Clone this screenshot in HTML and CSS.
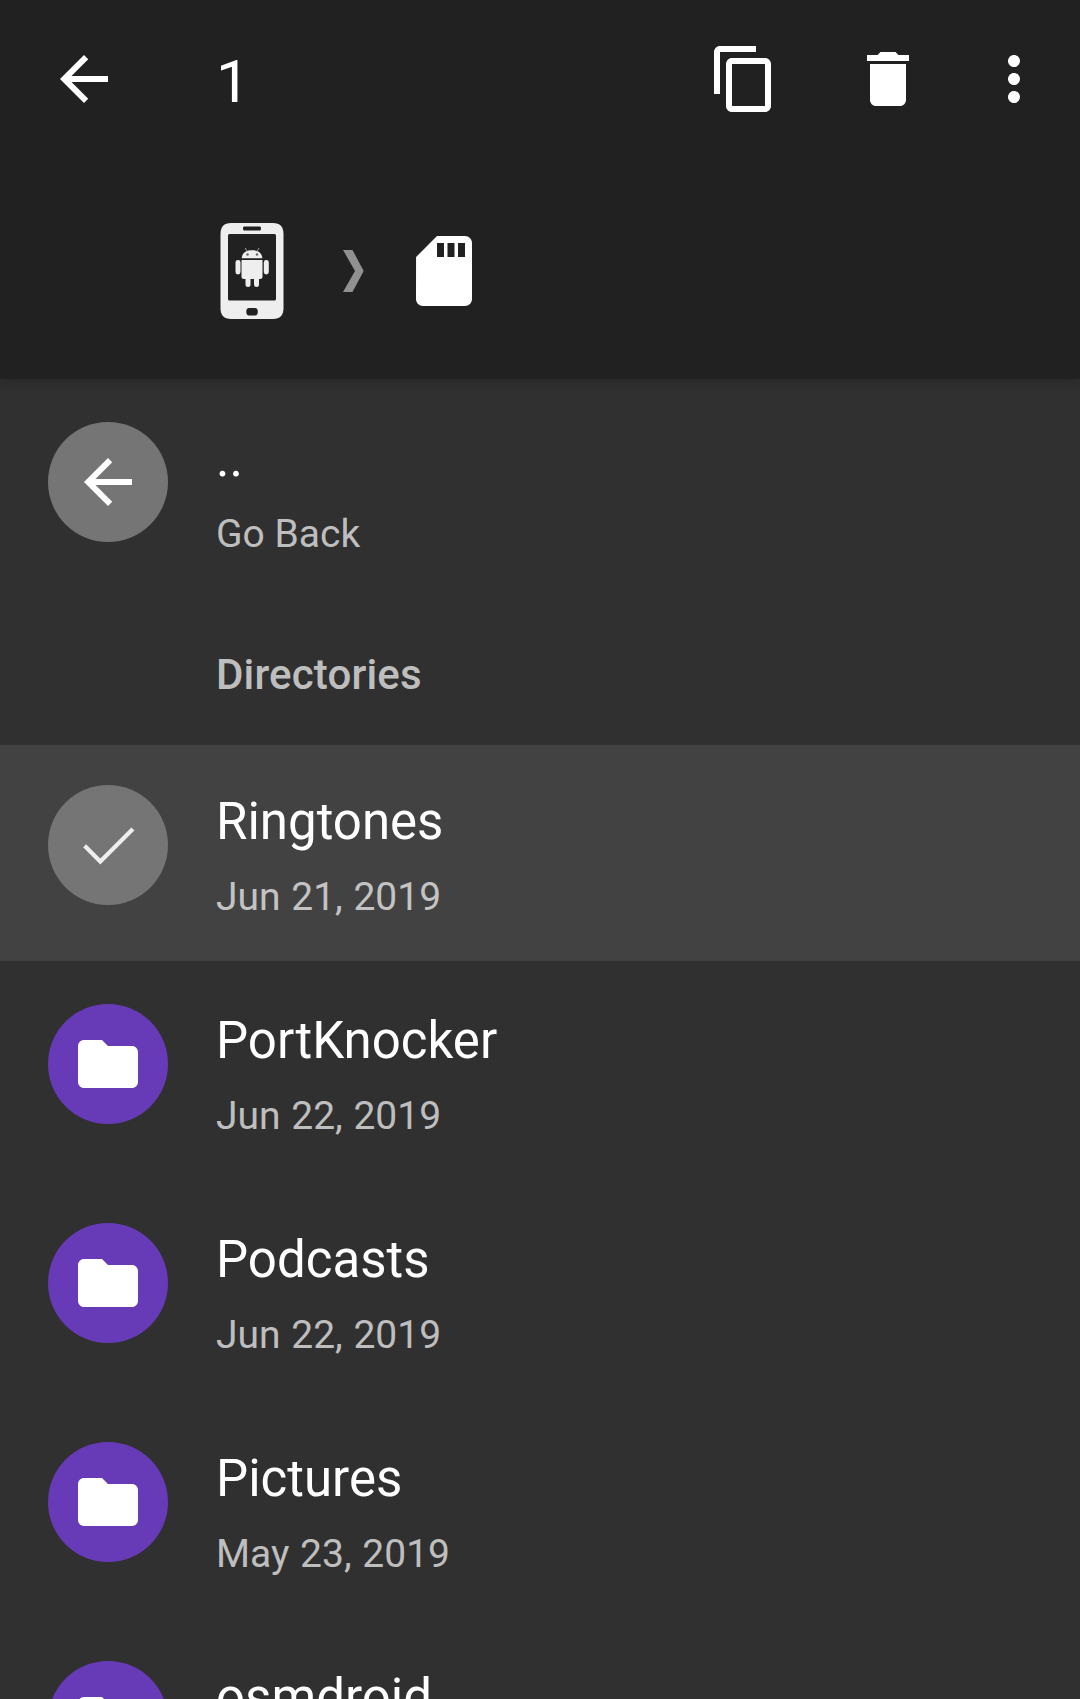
FILE: index.html
```html
<!DOCTYPE html>
<html lang="en">
<head>
<meta charset="utf-8">
<title>Files</title>
<link rel="stylesheet" href="styles.css">
</head>
<body>
<svg class="defs" width="0" height="0" aria-hidden="true">
  <symbol id="arrow" viewBox="0 0 24 24"><path d="M20 11H7.830l5.590-5.590L12 4l-8 8 8 8 1.410-1.410L7.830 13H20v-2z"/></symbol>
  <symbol id="folder" viewBox="0 0 24 24"><path d="M10 4H4c-1.100 0-1.990.9-1.990 2L2 18c0 1.100.9 2 2 2h16c1.100 0 2-.9 2-2V8c0-1.100-.9-2-2-2h-8l-2-2z"/></symbol>
</svg>
<header class="appbar">
  <div class="toolbar">
    <svg class="icon"><use href="#arrow"/></svg>
    <span class="count">1</span>
    <div class="actions">
      <svg class="icon" viewBox="0 0 24 24"><path d="M16 1H4c-1.100 0-2 .9-2 2v14h2V3h12V1zm3 4H8c-1.100 0-2 .9-2 2v14c0 1.100.9 2 2 2h11c1.100 0 2-.9 2-2V7c0-1.100-.9-2-2-2zm0 16H8V7h11v14z"/></svg>
      <svg class="icon" viewBox="0 0 24 24"><path d="M6 19c0 1.100.9 2 2 2h8c1.100 0 2-.9 2-2V7H6v12zM19 4h-3.500l-1-1h-5l-1 1H5v2h14V4z"/></svg>
      <svg class="icon more" viewBox="0 0 24 24"><path d="M12 8c1.100 0 2-.9 2-2s-.9-2-2-2-2 .9-2 2 .9 2 2 2zm0 2c-1.100 0-2 .9-2 2s.9 2 2 2 2-.9 2-2-.9-2-2-2zm0 6c-1.100 0-2 .9-2 2s.9 2 2 2 2-.9 2-2-.9-2-2-2z"/></svg>
    </div>
  </div>
  <nav class="breadcrumb">
    <svg class="phone" viewBox="0 0 64 96">
      <path fill-rule="evenodd" d="M11 0H53Q63.500 0 63.500 11V85Q63.500 96 53 96H11Q.5 96 .5 85V11Q.5 0 11 0ZM9.500 11Q8 11 8 12.500V76Q8 77.500 9.500 77.500H54.500Q56 77.500 56 76V12.500Q56 11 54.500 11ZM24 3.500Q23 3.500 23 5.500T24 7.500H40Q41 7.500 41 5.500T40 3.500ZM29 85Q26.300 85 26.300 88.700T29 92.500H35Q37.800 92.500 37.800 88.700T35 85Z"/>
      <path d="M21.700 35.200C22 30 26 27.200 32 27.200S42 30 42.400 35.200ZM21.500 37H42.500V53.500Q42.500 56 40 56H39V61.500A2.500 2.500 0 0 1 34 61.500V56H30.500V61.500A2.500 2.500 0 0 1 25.500 61.500V56H24Q21.500 56 21.500 53.500Z"/>
      <rect x="15.500" y="37" width="5" height="14.500" rx="2.400"/><rect x="43.800" y="37" width="5" height="14.500" rx="2.400"/>
      <path class="antenna" d="M25.200 25l2 3.500M39 25l-2 3.500"/>
      <circle class="eye" cx="27.500" cy="31.500" r="1.200"/><circle class="eye" cx="37" cy="31.500" r="1.200"/>
    </svg>
    <svg class="chevron" viewBox="0 0 21 42"><path d="M0 0H9.500L20.700 21 9.500 42H0L12 21z"/></svg>
    <svg class="card" viewBox="0 0 24 24"><path d="M18 2h-8L4.020 8 4 20c0 1.100.9 2 2 2h12c1.100 0 2-.9 2-2V4c0-1.100-.9-2-2-2zm-6 6h-2V4h2v4zm3 0h-2V4h2v4zm3 0h-2V4h2v4z"/></svg>
  </nav>
</header>
<main class="list">
  <div class="row">
    <div class="avatar gray"><svg class="icon"><use href="#arrow"/></svg></div>
    <div class="text"><div class="title">..</div><div class="sub">Go Back</div></div>
  </div>
  <h2 class="section">Directories</h2>
  <div class="row selected">
    <div class="avatar gray"><svg class="icon check" viewBox="0 0 72 72"><path d="M12.600 36.800 28.300 52.500 60.900 19.900"/></svg></div>
    <div class="text"><div class="title">Ringtones</div><div class="sub date">Jun 21, 2019</div></div>
  </div>
  <div class="row">
    <div class="avatar"><svg class="icon"><use href="#folder"/></svg></div>
    <div class="text"><div class="title">PortKnocker</div><div class="sub date">Jun 22, 2019</div></div>
  </div>
  <div class="row">
    <div class="avatar"><svg class="icon"><use href="#folder"/></svg></div>
    <div class="text"><div class="title">Podcasts</div><div class="sub date">Jun 22, 2019</div></div>
  </div>
  <div class="row">
    <div class="avatar"><svg class="icon"><use href="#folder"/></svg></div>
    <div class="text"><div class="title">Pictures</div><div class="sub date">May 23, 2019</div></div>
  </div>
  <div class="row">
    <div class="avatar"><svg class="icon"><use href="#folder"/></svg></div>
    <div class="text"><div class="title">osmdroid</div></div>
  </div>
</main>
</body>
</html>
```
FILE: styles.css
```css
* { box-sizing: border-box; }
body {
  margin: 0;
  height: 1699px;
  display: flex;
  flex-direction: column;
  overflow: hidden;
  background: #303030;
  color: #fff;
  font-family: Roboto, sans-serif;
}
svg { display: block; flex: none; fill: currentColor; }
.defs { display: none; }
.icon { width: 72px; height: 72px; }

.appbar {
  flex: none;
  height: 379px;
  background: #212121;
  box-shadow: 0 3px 10px rgba(0, 0, 0, .2);
}
.toolbar {
  height: 158px;
  padding: 0 30px 0 48px;
  display: flex;
  align-items: center;
}
.count {
  margin-left: 96px;
  padding-top: 5px;
  font-size: 60px;
  line-height: 70px;
}
.actions { margin-left: auto; display: flex; gap: 72px; }
.more { margin-left: -18px; }

.breadcrumb {
  padding: 65px 0 0 220px;
  display: flex;
  align-items: center;
}
.phone { width: 64px; height: 96px; color: #eee; }
.antenna { fill: none; stroke: #aaa; stroke-width: .9; }
.eye { fill: #666; }
.chevron { width: 21px; height: 42px; margin: 0 38px 0 59px; color: #909090; }
.card { width: 84px; height: 84px; }

.list { flex: 1; min-height: 0; overflow: hidden; padding-top: 3px; }
.row {
  height: 216px;
  margin-bottom: 3px;
  padding: 40px 48px 0;
  display: flex;
  gap: 48px;
}
.row:last-child { margin-bottom: 0; }
.selected { background: #424242; }
.avatar {
  flex: none;
  width: 120px;
  height: 120px;
  border-radius: 50%;
  background: #673ab7;
  display: flex;
  align-items: center;
  justify-content: center;
}
.gray { background: #757575; }
.check { fill: none; stroke: #eee; stroke-width: 4.200; }
.text { padding-top: 7px; }
.title { font-size: 51px; line-height: 60px; }
.sub {
  margin-top: 22px;
  font-size: 39px;
  line-height: 46px;
  color: rgba(255, 255, 255, .7);
}
.date { word-spacing: 1px; }
.section {
  margin: -3px 0 0;
  height: 147px;
  padding: 5px 0 0 216px;
  font-size: 42px;
  font-weight: 500;
  letter-spacing: .15px;
  line-height: 144px;
  color: rgba(255, 255, 255, .7);
}
```
